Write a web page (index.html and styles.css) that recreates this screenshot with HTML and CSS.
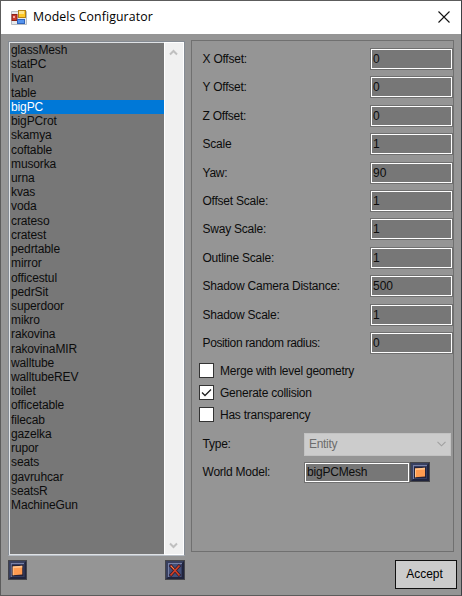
FILE: index.html
```
<!DOCTYPE html>
<html lang="en">
<head>
<meta charset="utf-8">
<title>Models Configurator</title>
<link rel="stylesheet" href="styles.css">
</head>
<body>
<svg width="0" height="0" class="defs">
  <symbol id="tile" viewBox="0 0 20 20">
    <rect width="20" height="20" fill="#454549"/>
    <rect x="1" y="1" width="18" height="18" fill="#20243c"/>
    <path d="M1 1h18l-3 3H4v12l-3 3z" fill="#38405f"/>
    <rect x="3" y="3" width="14" height="14" fill="#7880a6"/>
    <rect x="4" y="4" width="13" height="13" fill="#343c60"/>
  </symbol>
  <symbol id="box" viewBox="0 0 20 20">
    <use href="#tile"/>
    <rect x="4" y="5" width="12" height="11" fill="#252237"/>
    <path d="M5 6.5l10-.7v8.7l-10 .8z" fill="#ff9b50"/>
    <path d="M5 6.5l10-.7v1.6l-9 .6v7.2H5z" fill="#ffc48c"/>
  </symbol>
  <symbol id="cross" viewBox="0 0 20 20">
    <use href="#tile"/>
    <rect x="4" y="4" width="12" height="13" fill="#435079"/>
    <path d="M5 5l10 11M15 5L5 16" stroke="#301b2b" stroke-width="3.2"/>
    <path d="M5.5 5.5l9 10M14.500 5.500L5.500 15.500" stroke="#cf3e26" stroke-width="1.8"/>
    <path d="M6 6l3 3" stroke="#f28a4c"/>
  </symbol>
</svg>
<div class="window">
  <header class="titlebar">
    <svg class="app-icon" width="16" height="16" viewBox="0 0 16 16">
      <path d="M.5 1.500h15v13H.5z" fill="#e6e9ec" stroke="#b6bcc2"/>
      <rect x="7.500" y=".5" width="7" height="7" fill="#ffc928" stroke="#b58214"/>
      <rect x="8" y="1" width="5" height="3" fill="#ffe48a"/>
      <rect x="1" y="4.500" width="5" height="6" fill="#c93a2c" stroke="#8d2018"/>
      <rect x="2" y="6" width="2" height="2" fill="#f6a79b"/>
      <rect x="6.500" y="9.500" width="7" height="4" fill="#5594ee" stroke="#3063bb"/>
    </svg>
    <h1 class="title">Models Configurator</h1>
    <svg class="close" width="12" height="12" viewBox="0 0 12 12"><path d="M.5.5l11 11M11.500.5l-11 11" stroke="#111" stroke-width="1.100"/></svg>
  </header>
  <main class="body">
    <section class="left">
      <div class="listbox">
        <ul class="items">
          <li>glassMesh</li><li>statPC</li><li>Ivan</li><li>table</li><li class="selected">bigPC</li><li>bigPCrot</li><li>skamya</li><li>coftable</li><li>musorka</li><li>urna</li><li>kvas</li><li>voda</li><li>crateso</li><li>cratest</li><li>pedrtable</li><li>mirror</li><li>officestul</li><li>pedrSit</li><li>superdoor</li><li>mikro</li><li>rakovina</li><li>rakovinaMIR</li><li>walltube</li><li>walltubeREV</li><li>toilet</li><li>officetable</li><li>filecab</li><li>gazelka</li><li>rupor</li><li>seats</li><li>gavruhcar</li><li>seatsR</li><li>MachineGun</li>
        </ul>
        <div class="scrollbar">
          <svg width="9" height="7" viewBox="0 0 9 7"><path d="M1 5.500l3.500-3.500L8 5.500" fill="none" stroke="#bfbfbf" stroke-width="2"/></svg>
          <svg width="9" height="7" viewBox="0 0 9 7"><path d="M1 1.500L4.500 5 8 1.500" fill="none" stroke="#bfbfbf" stroke-width="2"/></svg>
        </div>
      </div>
      <div class="tools">
        <svg width="19" height="20" viewBox="0 0 20 20" preserveAspectRatio="none"><use href="#box"/></svg>
        <svg width="20" height="20"><use href="#cross"/></svg>
      </div>
    </section>
    <section class="right">
      <div class="panel">
        <div class="fields">
          <div class="row"><span class="label">X Offset:</span><span class="input">0</span></div>
          <div class="row"><span class="label">Y Offset:</span><span class="input">0</span></div>
          <div class="row"><span class="label">Z Offset:</span><span class="input">0</span></div>
          <div class="row"><span class="label">Scale</span><span class="input">1</span></div>
          <div class="row"><span class="label">Yaw:</span><span class="input">90</span></div>
          <div class="row"><span class="label">Offset Scale:</span><span class="input">1</span></div>
          <div class="row"><span class="label">Sway Scale:</span><span class="input">1</span></div>
          <div class="row"><span class="label">Outline Scale:</span><span class="input">1</span></div>
          <div class="row"><span class="label">Shadow Camera Distance:</span><span class="input">500</span></div>
          <div class="row"><span class="label">Shadow Scale:</span><span class="input">1</span></div>
          <div class="row"><span class="label tight">Position random radius:</span><span class="input">0</span></div>
        </div>
        <div class="checks">
          <div class="check"><span class="tick"></span><span>Merge with level geometry</span></div>
          <div class="check"><span class="tick"><svg width="13" height="13" viewBox="0 0 13 13"><path d="M2 6.500l3 3L11 3.500" fill="none" stroke="#222" stroke-width="1.300"/></svg></span><span>Generate collision</span></div>
          <div class="check"><span class="tick"></span><span>Has transparency</span></div>
        </div>
        <div class="type-row"><span class="label">Type:</span><span class="select"><span>Entity</span><svg width="9" height="6" viewBox="0 0 9 6"><path d="M.5.8l4 4 4-4" fill="none" stroke="#a0a0a0" stroke-width="1.100"/></svg></span></div>
        <div class="model-row"><span class="label">World Model:</span><span class="input model">bigPCMesh</span><svg width="20" height="20"><use href="#box"/></svg></div>
      </div>
      <button class="accept">Accept</button>
    </section>
  </main>
</div>
</body>
</html>
```
FILE: styles.css
```
* { box-sizing: border-box; }
body {
  margin: 0;
  font: 12px/14px "Liberation Sans", Arial, sans-serif;
  color: #0c0c0c;
}
.defs { position: absolute; }
svg { display: block; flex: none; }
.window {
  width: 462px;
  height: 596px;
  border: 1px solid #5c5c5c;
  border-right-color: #3c4044;
  background: #959595;
  display: flex;
  flex-direction: column;
}
.titlebar {
  height: 33px;
  flex: none;
  background: #fff;
  display: flex;
  align-items: center;
  padding: 0 11px 0 10px;
}
.title {
  margin: 0 auto 0 6px;
  font: 12.3px/16px "Open Sans", "Noto Sans", sans-serif;
  letter-spacing: .1px;
  color: #000;
  padding-bottom: 1px;
}
.close { margin-bottom: 2px; }
.body {
  flex: 1;
  display: flex;
  gap: 6px;
  padding: 6px 0 0 7px;
}
.left { width: 177px; padding-top: 1px; }
.listbox {
  height: 515px;
  border: 1px solid #858b93;
  border-bottom-color: #b8bec6;
  display: flex;
  background: #777;
  box-shadow: inset 1px 1px #dfe2e5, inset 0 -1px #dfe2e5;
}
.items {
  list-style: none;
  margin: 0;
  padding: 1px 0 0 1px;
  flex: 1;
  letter-spacing: -.12px;
}
.items li {
  height: 14.22px;
  line-height: 14.22px;
  padding-left: 1px;
  white-space: nowrap;
}
.items .selected { background: #0078d7; color: #fff; }
.scrollbar {
  width: 20px;
  background: #f0f0f0;
  border: 1px solid #fff;
  display: flex;
  flex-direction: column;
  align-items: center;
  justify-content: space-between;
  padding: 6px 1px 5px 0;
}
.tools {
  display: flex;
  justify-content: space-between;
  margin-top: 4px;
}
.right { width: 263px; }
.panel {
  height: 512px;
  border: 1px solid #707070;
  padding: 7px 0 0;
}
.row {
  height: 28.42px;
  display: flex;
  justify-content: space-between;
  align-items: flex-start;
}
.label { padding: 4px 0 0 10.5px; white-space: nowrap; letter-spacing: -.23px; }
.tight { letter-spacing: -.37px; }
.input {
  width: 83px;
  height: 22px;
  border: 1px solid #707070;
  background: #777;
  box-shadow: inset 0 0 0 1px #fff;
  padding: 3px 0 0 2px;
}
.checks { padding: 3px 0 0 7px; letter-spacing: -.24px; }
.check {
  height: 21.700px;
  display: flex;
  gap: 6px;
  line-height: 16px;
}
.tick {
  width: 15px;
  height: 15px;
  border: 1px solid #333;
  background: #fff;
}
.type-row { display: flex; height: 33px; padding-top: 4px; justify-content: space-between; }
.type-row .label { padding-top: 4px; }
.select {
  width: 147px;
  height: 23px;
  margin-right: 2px;
  background: #ccc;
  border: 1px solid #c2c2c2;
  color: #6d6d6d;
  display: flex;
  justify-content: space-between;
  align-items: center;
  padding: 1px 4px;
  letter-spacing: -.3px;
}
.model-row { display: flex; }
.model-row .label { width: 112px; padding-top: 3px; }
.model { width: 106px; height: 21px; padding: 2px 0 0 2px; letter-spacing: -.2px; }
.accept {
  display: block;
  width: 62px;
  height: 29px;
  margin: 8px 0 0 204px;
  padding: 0 3px 2px 0;
  border: 1px solid #111;
  background: #ccc;
  color: #000;
  font: 12px/14px "Liberation Sans", Arial, sans-serif;
}
```
